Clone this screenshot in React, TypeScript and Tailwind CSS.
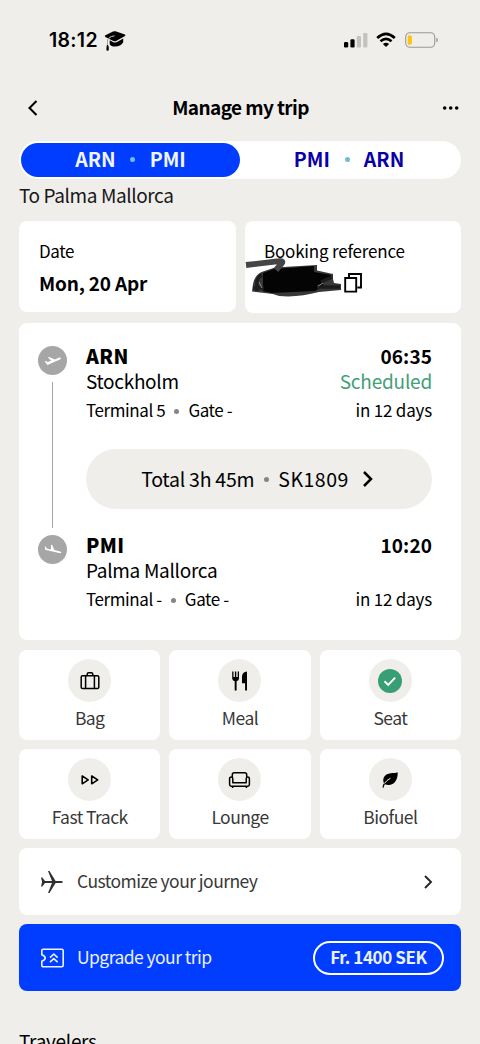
import type { ReactNode } from 'react'

const extras = [
  { label: 'Bag', icon: <BagIcon /> },
  { label: 'Meal', icon: <MealIcon /> },
  { label: 'Seat', icon: <SeatIcon /> },
  { label: 'Fast Track', icon: <FastTrackIcon /> },
  { label: 'Lounge', icon: <LoungeIcon /> },
  { label: 'Biofuel', icon: <BiofuelIcon /> },
]

function BagIcon() {
  return (
    <svg className="w-5 h-5" viewBox="0 0 20 20" fill="none" stroke="black" strokeWidth="1.5">
      <rect x="1.2" y="4.8" width="17.6" height="12.8" rx="1.4" />
      <path d="M5.6 4.8v12.8M14.4 4.8v12.8M7.2 4.8V3.2Q7.2 1.7 8.7 1.7h2.6q1.5 0 1.5 1.5v1.6" />
    </svg>
  )
}

function MealIcon() {
  return (
    <svg className="w-5 h-5" viewBox="0 0 20 20" fill="black">
      <path d="M2.2.6h1.300v5.400h1.400V.6h1.400v5.400h1.400V.6H9v6.800q0 2.200-2.400 2.900v9.300H4.700v-9.300Q2.200 9.600 2.200 7.400z" />
      <path d="M17 .6v19h-1.900v-7.300H12V5.800Q12.200.8 17 .6z" />
    </svg>
  )
}

function SeatIcon() {
  return (
    <svg className="w-6 h-6" viewBox="0 0 24 24" fill="none">
      <circle cx="12" cy="12" r="12" fill="#389e74" />
      <path d="M6.500 12.300l3.700 3.600 7-7.300" stroke="white" strokeWidth="2" />
    </svg>
  )
}

function FastTrackIcon() {
  return (
    <svg className="w-5 h-5" viewBox="0 0 20 20" fill="none" stroke="black" strokeWidth="1.600" strokeLinejoin="round">
      <path d="M2.200 6v7.800l6-3.900zM11.700 6v7.800l6-3.900z" />
    </svg>
  )
}

function LoungeIcon() {
  return (
    <svg className="w-[23px] h-5" viewBox="0 0 23 20" fill="none" stroke="black" strokeWidth="1.500" strokeLinejoin="round">
      <path d="M4.300 7V4.700Q4.300 2.700 6.300 2.700h10.400q2 0 2 2V7" />
      <path d="M4.800 12.700V8.700Q4.800 7 3.200 7T1.600 8.700v5.800q0 1.700 1.700 1.700h16.400q1.700 0 1.700-1.700V8.700Q21.400 7 19.800 7t-1.600 1.700v4zM4.600 16.200V18M18.400 16.200V18" />
    </svg>
  )
}

function BiofuelIcon() {
  return (
    <svg className="w-5 h-5" viewBox="0 0 20 20">
      <path d="M17.700 2.200C18 9.500 14.500 14.900 8.500 15q-2 0-3.500-.700C3.900 15.600 3.800 16.400 3.700 17.800H2.600C2.600 16 3 14.700 4 13.300 1.700 8.200 5.200 3.800 10.600 3.200 13.300 2.900 15.800 3 17.700 2.200z" fill="black" />
      <path d="M4.400 13.500Q6.500 10.300 10.500 8.200" stroke="#efeeeb" strokeWidth="1" fill="none" />
    </svg>
  )
}

function TakeoffIcon() {
  return (
    <svg className="w-[18px] h-[18px]" viewBox="0 0 18 18" fill="white">
      <path d="M.7 9.200l1-.3 2 1.200 3.500-1.300-3.300-3.400 1.300-.5 5.600 2.500 3.900-1.600q1.700-.6 2.200.2.300 1-1.500 1.700L3.400 13z" />
    </svg>
  )
}

function LandingIcon() {
  return (
    <svg className="w-[18px] h-[18px]" viewBox="0 0 18 18" fill="white">
      <path d="M.8 5.600l1 .2 1 1.700 4.100.9L7 3.800l1.200.3 2.200 5 5 1.100q1.900.500 1.900 1.400-.3.900-2.200.5L1.900 9q-.8-.2-.9-1z" />
    </svg>
  )
}

function StatusBar() {
  return (
    <div className="flex h-[79px] items-center justify-between pl-[49px] pr-[41px]">
      <div className="flex items-center">
        <span className="w-[55px] font-['Inter'] text-[19.5px] font-semibold leading-6 tracking-[0.3px]">18:12</span>
        {/* Graduation cap of the active focus mode */}
        <svg className="mt-[3px] h-5 w-[22px]" viewBox="0 0 22 20">
          <path d="M11.500.300q-1.200-.300-2.500.200L1.400 4.200q-1.300.8 0 1.700l7.900 4.200q1.400.500 2.900 0l8.800-5.200q1-.7-.1-1.300z" />
          <path d="M5.700 9.300l3.600 1.900q1.900.700 3.700-.1l6.200-3.600v3.700q-2.500 4.300-8.200 4.300-4 0-5.300-2.300z" />
          <path d="M10.500 4.800Q4 5.800 3.700 10.500v3.200q1.600.6 1.300 3.400v2.400q-1.400.8-2.800 0v-2.400q0-2 .8-3.300V10.300Q3.200 6 10.500 4.800z" stroke="#efeeeb" strokeWidth=".5" />
        </svg>
      </div>
      <div className="flex items-center">
        <svg className="w-6 h-4" viewBox="0 0 24 16">
          <rect x="0" y="10" width="4.200" height="5.500" rx="1.200" />
          <rect x="6.400" y="7.300" width="4.200" height="8.200" rx="1.200" />
          <rect x="12.800" y="4" width="4.200" height="11.500" rx="1.200" fill="#c2c2c0" />
          <rect x="19.200" y="1" width="4.200" height="14.500" rx="1.200" fill="#c2c2c0" />
        </svg>
        <svg className="ml-2 h-4 w-5" viewBox="0 0 20 16" fill="none" stroke="black" strokeWidth="2.700">
          <path d="M1.200 6Q10-2.200 18.800 6" />
          <path d="M4.500 9.300Q10 4.500 15.500 9.300" />
          <path d="M6.900 11.900Q10 9.400 13.100 11.900L10 15.100z" fill="black" stroke="none" />
        </svg>
        <svg className="ml-[9px] h-4 w-[34px]" viewBox="0 0 34 16" fill="none">
          <rect x="0.700" y="0.700" width="29" height="14.600" rx="4.200" stroke="#999996" strokeWidth="1.100" />
          <rect x="2.700" y="3.300" width="4.200" height="9.400" rx="1.500" fill="#fcc515" />
          <path d="M31.300 5.700v4.500q1.700-.4 1.700-2.250T31.300 5.700z" fill="#999996" />
        </svg>
      </div>
    </div>
  )
}

function Header() {
  return (
    <div className="flex h-[62px] items-center justify-between pl-[26px] pr-5 pb-1">
      <svg className="w-4 h-[18px]" viewBox="0 0 16 18" fill="none" stroke="black" strokeWidth="2.100">
        <path d="M10.500 2l-7 7 7 7" />
      </svg>
      <h1 className="-ml-[3px] pb-[2px] text-[19px] font-bold leading-6 tracking-[-0.6px]">Manage my trip</h1>
      <svg className="w-[18px] h-1" viewBox="0 0 18 4">
        <circle cx="2.700" cy="2" r="1.800" />
        <circle cx="8.700" cy="2" r="1.800" />
        <circle cx="14.700" cy="2" r="1.800" />
      </svg>
    </div>
  )
}

function RouteTabs() {
  return (
    <div className="flex h-[38px] rounded-full bg-white py-[2px] pl-[2px] text-[19.5px] font-bold">
      <button className="flex h-[34px] w-[219px] items-center justify-center rounded-full bg-[#003dff] text-[#f2f5ff]">
        <span className="-mt-[2px]">ARN</span>
        <span className="-mt-[2px] ml-[14px] mr-[15px] h-[5px] w-[5px] rounded-full bg-[#72baff]" />
        <span className="-mt-[2px]">PMI</span>
      </button>
      <button className="flex flex-1 items-center justify-center pr-[3px] text-[#0b00a5]">
        <span className="-mt-[2px]">PMI</span>
        <span className="-mt-[2px] ml-[15px] mr-[14px] h-[5px] w-[5px] rounded-full bg-[#72bada]" />
        <span className="-mt-[2px]">ARN</span>
      </button>
    </div>
  )
}

function BookingInfo() {
  return (
    <div className="mt-[10px] flex gap-[9px]">
      <div className="h-[91px] w-[217px] rounded-lg bg-white pl-5 pt-[18px]">
        <p className="text-[17px] leading-6 tracking-[-0.4px]">Date</p>
        <p className="mt-2 text-[19px] font-bold leading-6 tracking-[-0.2px]">Mon, 20 Apr</p>
      </div>
      <div className="relative h-[92px] flex-1 rounded-lg bg-white pl-[19px] pt-[18px]">
        <p className="text-[17px] leading-6 tracking-[-0.2px]">Booking reference</p>
        <svg className="ml-20 mt-[10px] h-5 w-[19px]" viewBox="0 0 19 20" fill="none" stroke="black" strokeWidth="1.900">
          <path d="M1.200 5h11v13.600h-11zM5 4.200V1h12v13.500h-3.600" />
        </svg>
        {/* Marker strokes hiding the reference */}
        <svg className="absolute left-0 top-9 h-[42px] w-[100px]" viewBox="0 0 100 42" fill="none">
          <path d="M8 27Q10 17 18 14.500L30 10.500 72 8v5.500L88 17v5l1 4 7 1v6L74 35Q58 39 43.500 39.500 33 39.500 28 37L7 34.500z" fill="#383838" />
          <path d="M18 16l11-4 40-3v6l17 3v4l-10 2 3 5-9 5-44 2-8-2z" fill="#040404" />
          <path d="M12 34V24q1-4 5-6M8 31h11M76 25l11-5M72 30h23" stroke="#1c1c1c" strokeWidth="3.500" />
          <path d="M14 25l3 6M73 29l5-3" stroke="#8a8a8a" strokeWidth="1" />
          <path d="M1 8L34 4.200q5-.7 2.500 2.500L31 13" stroke="#454545" strokeWidth="5.800" />
        </svg>
      </div>
    </div>
  )
}

type StopProps = {
  code: string
  city: string
  terminal: string
  time: string
  status?: string
}

function Stop({ code, city, terminal, time, status }: StopProps) {
  return (
    <div className="flex justify-between">
      <div>
        <p className="text-[19.5px] font-black leading-[25px] tracking-[0.4px]">{code}</p>
        <p className="text-[19px] leading-[26px] tracking-[-0.3px]">{city}</p>
        <p className="mt-[3px] flex items-center text-[17px] leading-[26px] tracking-[-0.4px]">
          {terminal}
          <span className="mx-[9px] mt-[2px] h-[5px] w-[5px] rounded-full bg-[#858585]" />
          Gate -
        </p>
      </div>
      <div className="text-right">
        <p className="text-[19px] font-bold leading-[25px] tracking-[0.1px]">{time}</p>
        {status && <p className="text-[19px] leading-[26px] tracking-[-0.2px] text-[#459e78]">{status}</p>}
        <p className={`text-[17px] leading-[26px] tracking-[-0.2px] ${status ? 'mt-[3px]' : 'mt-[29px]'}`}>in 12 days</p>
      </div>
    </div>
  )
}

function FlightCard() {
  return (
    <div className="mt-[10px] flex h-[317px] rounded-lg bg-white pl-[19px] pr-[29px]">
      <div className="flex w-[29px] flex-col items-center pt-[23px]">
        <div className="flex h-[29px] w-[29px] items-center justify-center rounded-full bg-[#a6a6a6]">
          <TakeoffIcon />
        </div>
        <div className="my-[7px] h-[146px] w-px bg-[#a3a3a3]" />
        <div className="flex h-[29px] w-[29px] items-center justify-center rounded-full bg-[#a6a6a6]">
          <LandingIcon />
        </div>
      </div>
      <div className="ml-[19px] flex-1 pt-5">
        <Stop code="ARN" city="Stockholm" terminal="Terminal 5" time="06:35" status="Scheduled" />
        <button className="mb-[23px] mt-[26px] flex h-[60px] w-full items-center justify-center rounded-full bg-[#efeeeb] pr-1 text-[19.5px]">
          <span className="-mt-px tracking-[-0.25px]">Total 3h 45m</span>
          <span className="ml-[10px] mr-[9px] h-[5px] w-[5px] rounded-full bg-[#858585]" />
          <span className="-mt-px tracking-[0.5px]">SK1809</span>
          <svg className="ml-[13px] h-4 w-[11px]" viewBox="0 0 11 16" fill="none" stroke="black" strokeWidth="2.500">
            <path d="M2 1l7 7-7 7" />
          </svg>
        </button>
        <Stop code="PMI" city="Palma Mallorca" terminal="Terminal -" time="10:20" />
      </div>
    </div>
  )
}

function ExtraCard({ label, icon }: { label: string; icon: ReactNode }) {
  return (
    <button className="flex h-[90px] flex-col items-center rounded-lg bg-white pt-[9px] text-[17.5px] tracking-[-0.55px] text-[#383838]">
      <span className="flex h-[43px] w-[43px] items-center justify-center rounded-full bg-[#efeeeb]">{icon}</span>
      <span className="mt-1 leading-6">{label}</span>
    </button>
  )
}

export default function App() {
  return (
    <div className="h-[1044px] w-[480px] overflow-hidden bg-[#efeeeb] font-['Noto_Sans_CJK_SC',sans-serif] text-black">
      <StatusBar />
      <Header />
      <main className="px-[19px]">
        <RouteTabs />
        <h2 className="mb-[12px] mt-[2px] text-[19px] leading-7 tracking-[-0.4px] text-[#181818]">To Palma Mallorca</h2>
        <BookingInfo />
        <FlightCard />
        <div className="mt-[10px] grid grid-cols-3 gap-[9px]">
          {extras.map((item) => (
            <ExtraCard key={item.label} label={item.label} icon={item.icon} />
          ))}
        </div>
        <button className="mt-[9px] flex h-[67px] w-full items-center rounded-lg bg-white pl-[22px] pr-7 text-[17.5px] tracking-[-0.55px] text-[#383838]">
          <svg className="w-[22px] h-[22px]" viewBox="0 0 22 22" fill="#303030">
            <path d="M0 6.500h1.300L4 9.900h7L7 0h1.500l6.100 9.900h5q2.400.1 2.400 1.100t-2.400 1.100h-5L8.500 22H7l4-9.900H4L1.300 15.500H0L1.100 11z" />
          </svg>
          <span className="-mt-px ml-[14px] flex-1 text-left">Customize your journey</span>
          <svg className="h-[14px] w-[9px]" viewBox="0 0 9 14" fill="none" stroke="#252525" strokeWidth="1.900">
            <path d="M1 1l6 6-6 6" />
          </svg>
        </button>
        <button className="mt-[9px] flex h-[67px] w-full items-center rounded-lg bg-[#003dff] pl-[22px] pr-[17px] text-[17.5px] tracking-[-0.55px] text-[#edf1ff]">
          <svg className="h-5 w-[23px]" viewBox="0 0 23 20" fill="none" stroke="currentColor" strokeWidth="1.600" strokeLinejoin="round">
            <path d="M2.200 1.300h18.600q1.400 0 1.400 1.400v14.600q0 1.400-1.400 1.400H2.200Q.8 18.700.8 17.300v-4Q4.200 12 4.200 10T.8 6.700v-4q0-1.400 1.400-1.400z" />
            <path d="M9 9.600l3.800-3.600 3.800 3.600M9 14.200l3.800-3.600 3.800 3.600" />
          </svg>
          <span className="ml-[13px] flex-1 text-left">Upgrade your trip</span>
          <span className="flex h-[34px] w-[131px] items-center justify-center rounded-full border-2 border-white pb-[2px] text-[17px] font-bold tracking-[-0.4px]">
            Fr. 1400 SEK
          </span>
        </button>
        <h2 className="mt-9 text-[19px] leading-7 tracking-[-0.3px]">Travelers</h2>
      </main>
    </div>
  )
}
